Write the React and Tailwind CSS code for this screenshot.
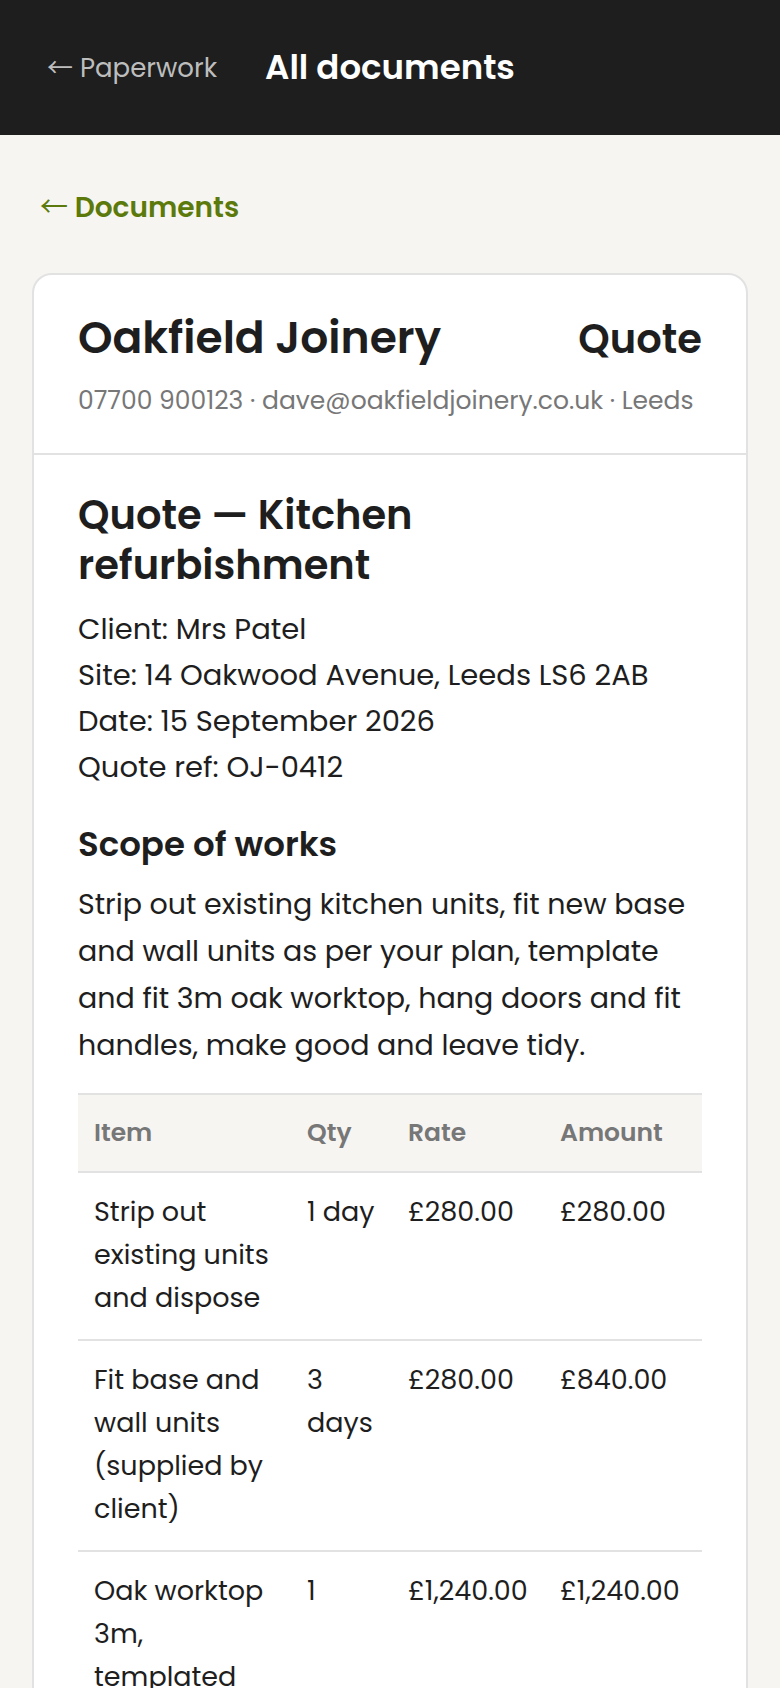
const items = [
  { item: 'Strip out existing units and dispose', qty: '1 day', rate: '£280.00', amount: '£280.00' },
  { item: 'Fit base and wall units (supplied by client)', qty: '3 days', rate: '£280.00', amount: '£840.00' },
  { item: 'Oak worktop 3m, templated and fitted', qty: '1', rate: '£1,240.00', amount: '£1,240.00' },
  { item: 'Hang doors and fit handles', qty: '1 day', rate: '£280.00', amount: '£280.00' },
];

const Arrow = () => <span className="font-['Noto_Sans_CJK_SC',sans-serif] font-normal leading-none">←</span>;

export default function App() {
  return (
    <div className="min-h-screen bg-[#f6f5f1] text-[#1e1e1e] font-['Poppins','Inter',sans-serif]">
      <header className="h-[135px] bg-[#1e1e1e] flex items-center pl-[47px] gap-[48px]">
        <a href="#" className="text-[26px] leading-[40px] text-[#bdbdbd] whitespace-nowrap">
          <Arrow /> Paperwork
        </a>
        <h1 className="text-[34px] font-semibold text-white">All documents</h1>
      </header>

      <main className="px-8 pt-[53px] pb-16">
        <a href="#" className="ml-[8px] inline-block text-[28px] font-semibold text-[#5c7a0b] leading-[40px] whitespace-nowrap">
          <Arrow /> Documents
        </a>

        <div className="mt-[45px] bg-white border-2 border-[#e2e2e2] rounded-[20px] overflow-hidden">
          <div className="px-[44px] pt-[38px] pb-[34px] border-b-2 border-[#e2e2e2]">
            <div className="flex items-baseline justify-between">
              <h2 className="text-[44px] leading-[50px] font-semibold">Oakfield Joinery</h2>
              <span className="text-[40px] leading-[50px] font-semibold">Quote</span>
            </div>
            <p className="mt-[19px] text-[25px] leading-[36px] text-[#777]">
              07700 900123 · dave@oakfieldjoinery.co.uk · Leeds
            </p>
          </div>

          <div className="px-[44px] pt-[35px] pb-10">
            <h3 className="text-[40px] leading-[50px] font-semibold max-w-[580px]">Quote — Kitchen refurbishment</h3>
            <div className="mt-[16px] text-[29px] leading-[46px]">
              <p>Client: Mrs Patel</p>
              <p>Site: 14 Oakwood Avenue, Leeds LS6 2AB</p>
              <p>Date: 15 September 2026</p>
              <p>Quote ref: OJ-0412</p>
            </div>

            <h4 className="mt-[33px] text-[34px] leading-[42px] font-semibold">Scope of works</h4>
            <p className="mt-[16px] text-[28.5px] leading-[47px]">
              Strip out existing kitchen units, fit new base and wall units as per your plan, template and fit 3m oak
              worktop, hang doors and fit handles, make good and leave tidy.
            </p>

            <table className="mt-[24px] w-full table-fixed border-collapse">
              <colgroup>
                <col className="w-[213px]" />
                <col className="w-[101px]" />
                <col className="w-[152px]" />
                <col />
              </colgroup>
              <thead>
                <tr className="bg-[#f6f5f2] border-y-2 border-[#e2e2e2]">
                  <th className="h-[78px] px-4 text-left text-[25px] font-semibold text-[#777]">Item</th>
                  <th className="px-4 text-left text-[25px] font-semibold text-[#777]">Qty</th>
                  <th className="px-4 text-left text-[25px] font-semibold text-[#777]">Rate</th>
                  <th className="px-4 text-left text-[25px] font-semibold text-[#777]">Amount</th>
                </tr>
              </thead>
              <tbody>
                {items.map((r) => (
                  <tr key={r.item} className="border-b-2 border-[#e2e2e2] align-top text-[27px] leading-[43px]">
                    <td className="px-4 pt-[17px] pb-[20px]">{r.item}</td>
                    <td className="pl-4 pr-3 pt-[17px] pb-[20px]">{r.qty}</td>
                    <td className="px-4 pt-[17px] pb-[20px] whitespace-nowrap">{r.rate}</td>
                    <td className="px-4 pt-[17px] pb-[20px] whitespace-nowrap">{r.amount}</td>
                  </tr>
                ))}
              </tbody>
            </table>
          </div>
        </div>
      </main>
    </div>
  );
}
